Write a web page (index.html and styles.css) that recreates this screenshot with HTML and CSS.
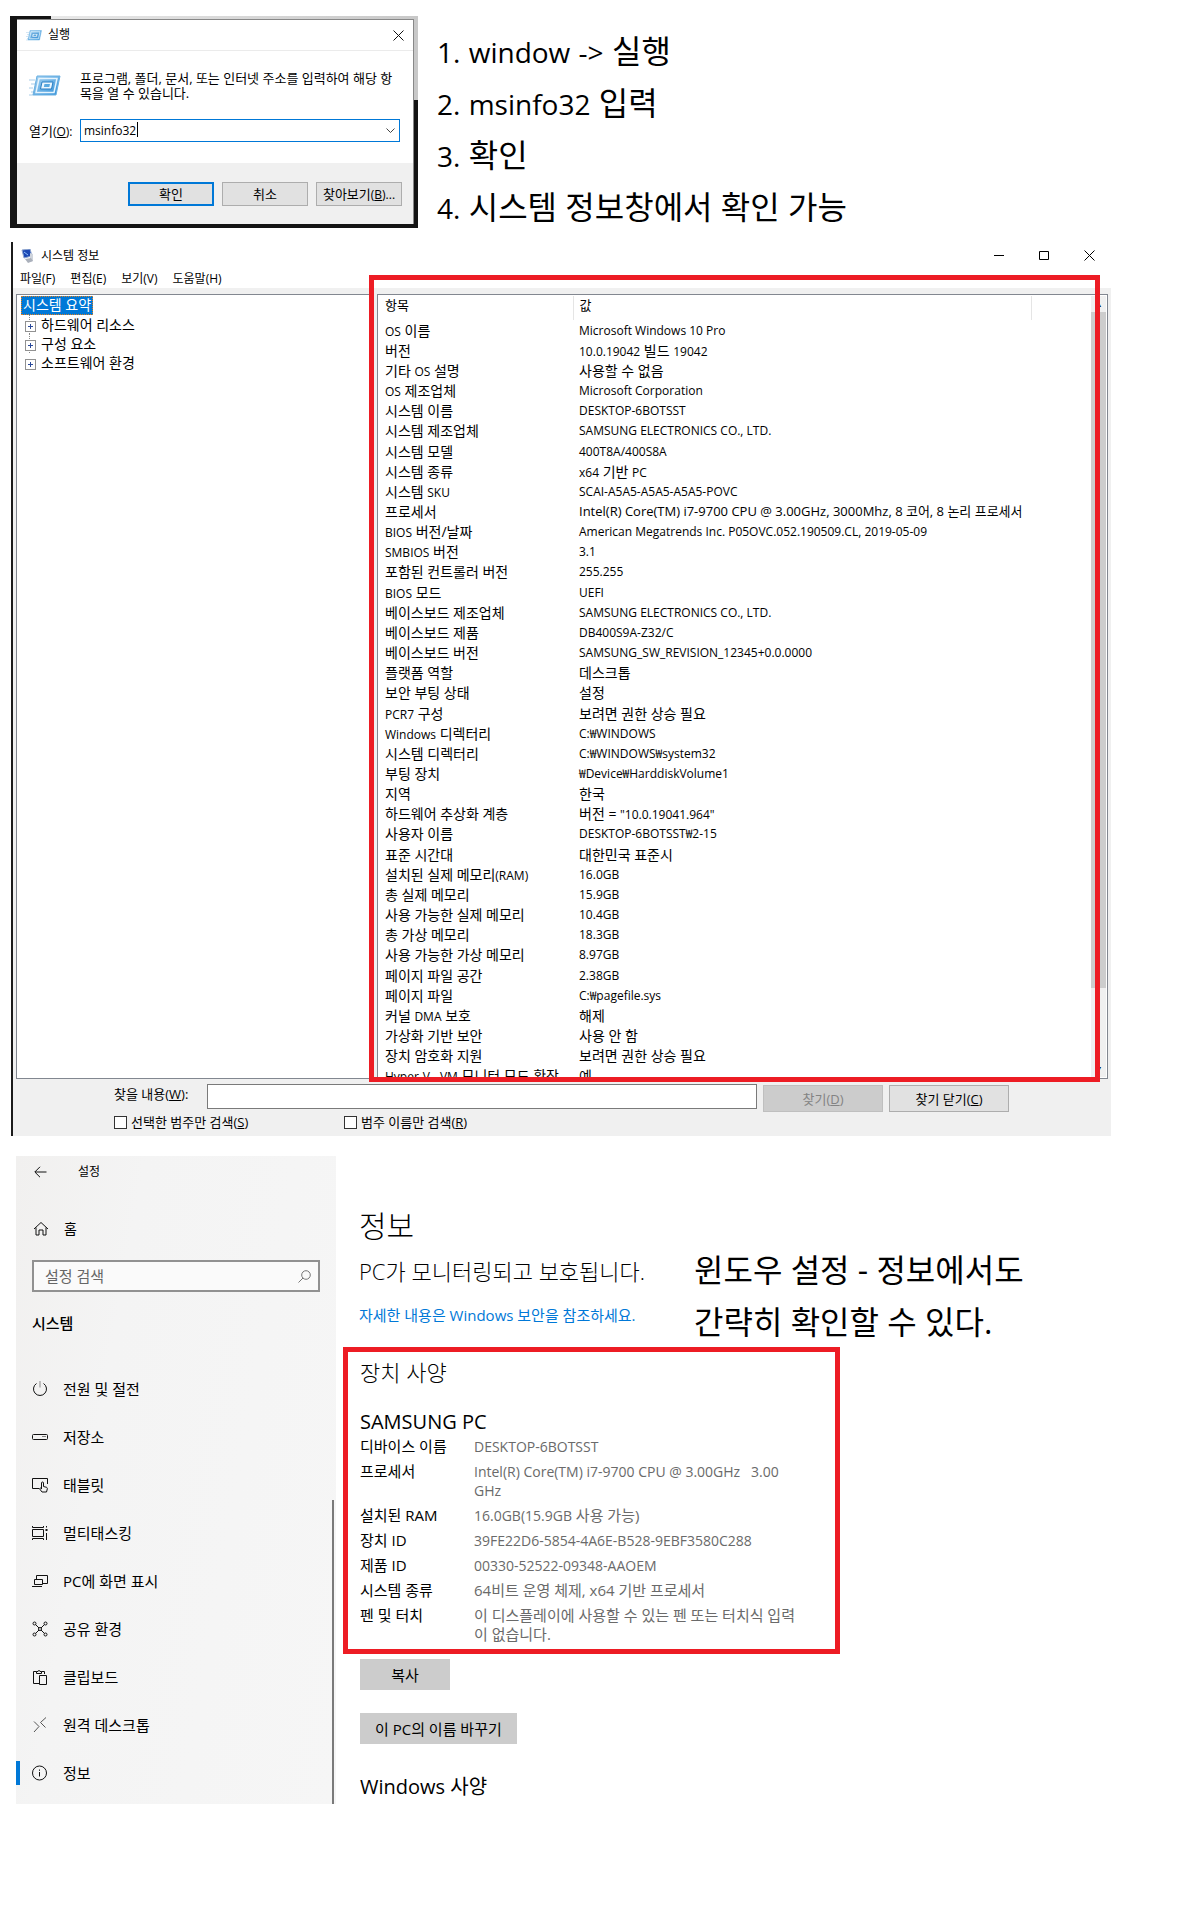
FILE: index.html
```html
<!DOCTYPE html>
<html lang="ko">
<head>
<meta charset="utf-8">
<meta name="viewport" content="width=device-width, initial-scale=1">
<title>컴퓨터 사양 확인 방법</title>
<link rel="stylesheet" href="styles.css">
</head>
<body>
<svg class="defs" width="0" height="0" aria-hidden="true">
  <defs>
    <linearGradient id="run-blue" x1="0" y1="0" x2="1" y2="1">
      <stop offset="0" stop-color="#a8d4f2"/><stop offset="1" stop-color="#2f8fd8"/>
    </linearGradient>
    <symbol id="run-icon" viewBox="0 0 32 22">
      <path d="M0 5h6M2 9h4M0 13h4M2 17h3M0 20h4" stroke="#a9cde8" stroke-width="1"/>
      <path d="M8 1h23l-4 19H4z" fill="url(#run-blue)" stroke="#6bb0e2"/>
      <path d="M10 3.500h18l-3 14H7z" fill="none" stroke="#e6f4fd" stroke-width="1.500"/>
      <path d="M13 7h11l-1.500 7H11.500z" fill="#eaf6fe" stroke="#2a7fc4"/>
      <path d="M15.500 9h5.500l-.7 3h-5.500z" fill="#5aa9e0"/>
    </symbol>
  </defs>
</svg>
<main>
  <section class="intro">
    <div class="run-shot">
      <form class="run">
        <header class="run-title">
          <svg class="run-small" width="16" height="13"><use href="#run-icon"/></svg>
          <span>실행</span>
          <button type="button" class="plain" aria-label="닫기"><svg width="11" height="11" viewBox="0 0 11 11"><path d="M.5.5l10 10M10.500.5l-10 10" stroke="#111" fill="none"/></svg></button>
        </header>
        <div class="run-body">
          <svg class="run-big" width="32" height="22"><use href="#run-icon"/></svg>
          <p>프로그램, 폴더, 문서, 또는 인터넷 주소를 입력하여 해당 항목을 열 수 있습니다.</p>
          <label for="open">열기<span class="en">(<u>O</u>):</span></label>
          <div class="combo">
            <input id="open" type="text" value="msinfo32">
            <span class="caret"></span>
            <svg width="9" height="5" viewBox="0 0 9 5"><path d="M.5.5l4 4 4-4" stroke="#444" fill="none"/></svg>
          </div>
        </div>
        <footer class="run-foot">
          <button type="button" class="btn primary">확인</button>
          <button type="button" class="btn">취소</button>
          <button type="button" class="btn">찾아보기<span class="en">(<u>B</u>)...</span></button>
        </footer>
      </form>
    </div>
    <ol class="note steps">
      <li><span class="en">1.</span> <span class="en">window</span> <span class="en">-&gt;</span> 실행</li>
      <li><span class="en">2.</span> <span class="en">msinfo32</span> 입력</li>
      <li><span class="en">3.</span> 확인</li>
      <li><span class="en">4.</span> 시스템 정보창에서 확인 가능</li>
    </ol>
  </section>

  <section class="sys">
    <header class="sys-title">
      <svg width="13" height="14" viewBox="0 0 13 14"><path d="M1 1l8-1 2 7-8 2z" fill="#1c48b4" stroke="#8fa6cf"/><path d="M3 3l4 3" stroke="#8ec0ff"/><path d="M9 4l3 1v7l-3 1z" fill="#cfd4dc"/><path d="M4 10l6-1 2 3-5 2z" fill="#aab0bb"/></svg>
      <h2>시스템 정보</h2>
      <div class="winctl">
        <button type="button" class="plain" aria-label="최소화"><svg width="11" height="11" viewBox="0 0 11 11"><path d="M0 5.500h10" stroke="#000"/></svg></button>
        <button type="button" class="plain" aria-label="최대화"><svg width="11" height="11" viewBox="0 0 11 11"><path d="M.5 1.500h9v8h-9z" stroke="#000" fill="none"/></svg></button>
        <button type="button" class="plain" aria-label="닫기"><svg width="11" height="11" viewBox="0 0 11 11"><path d="M.5.5l10 10M10.500.5l-10 10" stroke="#000"/></svg></button>
      </div>
    </header>
    <nav class="menu"><a href="#">파일(F)</a><a href="#">편집(E)</a><a href="#">보기(V)</a><a href="#">도움말(H)</a></nav>
    <div class="panes">
      <div class="tree">
        <span class="selected">시스템 요약</span>
        <ul>
          <li>하드웨어 리소스</li>
          <li>구성 요소</li>
          <li>소프트웨어 환경</li>
        </ul>
      </div>
      <div class="details">
        <table>
          <thead><tr><th>항목</th><th>값</th><th></th></tr></thead>
          <tbody>
            <tr><td><span class="en">OS</span> 이름</td><td colspan="2" class="en">Microsoft Windows 10 Pro</td></tr>
            <tr><td>버전</td><td colspan="2"><span class="en">10.0.19042</span> 빌드 <span class="en">19042</span></td></tr>
            <tr><td>기타 <span class="en">OS</span> 설명</td><td colspan="2">사용할 수 없음</td></tr>
            <tr><td><span class="en">OS</span> 제조업체</td><td colspan="2" class="en">Microsoft Corporation</td></tr>
            <tr><td>시스템 이름</td><td colspan="2" class="en">DESKTOP-6BOTSST</td></tr>
            <tr><td>시스템 제조업체</td><td colspan="2" class="en">SAMSUNG ELECTRONICS CO., LTD.</td></tr>
            <tr><td>시스템 모델</td><td colspan="2" class="en">400T8A/400S8A</td></tr>
            <tr><td>시스템 종류</td><td colspan="2"><span class="en">x64</span> 기반 <span class="en">PC</span></td></tr>
            <tr><td>시스템 <span class="en">SKU</span></td><td colspan="2" class="en">SCAI-A5A5-A5A5-A5A5-POVC</td></tr>
            <tr><td>프로세서</td><td colspan="2" class="mixed">Intel(R) Core(TM) i7-9700 CPU @ 3.00GHz, 3000Mhz, 8 코어, 8 논리 프로세서</td></tr>
            <tr><td><span class="en">BIOS</span> 버전/날짜</td><td colspan="2" class="en">American Megatrends Inc. P05OVC.052.190509.CL, 2019-05-09</td></tr>
            <tr><td><span class="en">SMBIOS</span> 버전</td><td colspan="2" class="en">3.1</td></tr>
            <tr><td>포함된 컨트롤러 버전</td><td colspan="2" class="en">255.255</td></tr>
            <tr><td><span class="en">BIOS</span> 모드</td><td colspan="2" class="en">UEFI</td></tr>
            <tr><td>베이스보드 제조업체</td><td colspan="2" class="en">SAMSUNG ELECTRONICS CO., LTD.</td></tr>
            <tr><td>베이스보드 제품</td><td colspan="2" class="en">DB400S9A-Z32/C</td></tr>
            <tr><td>베이스보드 버전</td><td colspan="2" class="en">SAMSUNG_SW_REVISION_12345+0.0.0000</td></tr>
            <tr><td>플랫폼 역할</td><td colspan="2">데스크톱</td></tr>
            <tr><td>보안 부팅 상태</td><td colspan="2">설정</td></tr>
            <tr><td><span class="en">PCR7</span> 구성</td><td colspan="2">보려면 권한 상승 필요</td></tr>
            <tr><td><span class="en">Windows</span> 디렉터리</td><td colspan="2" class="en">C:₩WINDOWS</td></tr>
            <tr><td>시스템 디렉터리</td><td colspan="2" class="en">C:₩WINDOWS₩system32</td></tr>
            <tr><td>부팅 장치</td><td colspan="2" class="en">₩Device₩HarddiskVolume1</td></tr>
            <tr><td>지역</td><td colspan="2">한국</td></tr>
            <tr><td>하드웨어 추상화 계층</td><td colspan="2">버전 = <span class="en">"10.0.19041.964"</span></td></tr>
            <tr><td>사용자 이름</td><td colspan="2" class="en">DESKTOP-6BOTSST₩2-15</td></tr>
            <tr><td>표준 시간대</td><td colspan="2">대한민국 표준시</td></tr>
            <tr><td>설치된 실제 메모리<span class="en">(RAM)</span></td><td colspan="2" class="en">16.0GB</td></tr>
            <tr><td>총 실제 메모리</td><td colspan="2" class="en">15.9GB</td></tr>
            <tr><td>사용 가능한 실제 메모리</td><td colspan="2" class="en">10.4GB</td></tr>
            <tr><td>총 가상 메모리</td><td colspan="2" class="en">18.3GB</td></tr>
            <tr><td>사용 가능한 가상 메모리</td><td colspan="2" class="en">8.97GB</td></tr>
            <tr><td>페이지 파일 공간</td><td colspan="2" class="en">2.38GB</td></tr>
            <tr><td>페이지 파일</td><td colspan="2" class="en">C:₩pagefile.sys</td></tr>
            <tr><td>커널 <span class="en">DMA</span> 보호</td><td colspan="2">해제</td></tr>
            <tr><td>가상화 기반 보안</td><td colspan="2">사용 안 함</td></tr>
            <tr><td>장치 암호화 지원</td><td colspan="2">보려면 권한 상승 필요</td></tr>
            <tr><td><span class="en">Hyper-V - VM</span> 모니터 모드 확장</td><td colspan="2">예</td></tr>
          </tbody>
        </table>
        <div class="scroll"><i>▴</i><div class="thumb"></div><i>▾</i></div>
      </div>
      <div class="mark"></div>
    </div>
    <form class="find">
      <label for="what">찾을 내용(<u>W</u>):</label>
      <input id="what" type="text">
      <button type="button" class="btn" disabled>찾기(<u>D</u>)</button>
      <button type="button" class="btn">찾기 닫기(<u>C</u>)</button>
      <div class="checks">
        <label><input type="checkbox"><span>선택한 범주만 검색(<u>S</u>)</span></label>
        <label><input type="checkbox"><span>범주 이름만 검색(<u>R</u>)</span></label>
      </div>
    </form>
  </section>

  <section class="settings">
    <aside class="side">
      <div class="back">
        <button type="button" class="plain" aria-label="뒤로"><svg width="13" height="12" viewBox="0 0 13 12"><path d="M12.500 6H1M6 .8L.8 6 6 11.200" stroke="#111" fill="none"/></svg></button>
        <span>설정</span>
      </div>
      <a class="home" href="#"><svg width="16" height="16" viewBox="0 0 16 16"><path d="M1 8l7-6.500L15 8M3 6.500v7.500h3V9h4v5h3V6.500" stroke="#111" fill="none"/></svg>홈</a>
      <div class="search">
        <input type="search" placeholder="설정 검색" aria-label="설정 검색">
        <svg width="13" height="13" viewBox="0 0 13 13"><circle cx="8" cy="5" r="4.300" stroke="#777" fill="none"/><path d="M5 8L.5 12.500" stroke="#777"/></svg>
      </div>
      <h3>시스템</h3>
      <ul class="nav">
        <li><a href="#"><svg viewBox="0 0 16 16"><path d="M4.500 2.500a6.500 6.500 0 1 0 7 0" stroke="#111" fill="none"/><path d="M8 0v6.500" stroke="#888"/></svg>전원 및 절전</a></li>
        <li><a href="#"><svg viewBox="0 0 16 16"><rect x=".5" y="5.500" width="15" height="5" rx="1" stroke="#111" fill="none"/><path d="M10.500 7.500h1M12.500 7.500h1" stroke="#111"/></svg>저장소</a></li>
        <li><a href="#"><svg viewBox="0 0 16 16"><path d="M7 11.500H.5v-10h15V7" stroke="#111" fill="none"/><path d="M9.500 12V6a1 1 0 0 1 2 0v3.500l3 .8c.8.3 1 1 .8 1.700l-.8 3H10L7.700 12c-.3-.8.8-1.500 1.800-.3" stroke="#111" fill="none"/></svg>태블릿</a></li>
        <li><a href="#"><svg viewBox="0 0 16 16"><path d="M.5 4.500h11v7H.5zM.5 1v1.500h11V1M.5 15v-1.500h11V15M14.500 1v1.500M14.500 8v7" stroke="#111" fill="none"/><path d="M13.500 4h2v2h-2z" fill="#111"/></svg>멀티태스킹</a></li>
        <li><a href="#"><svg viewBox="0 0 16 16"><path d="M4.500 6V2.500h11v8H11M2.500 6.500h8v5h-8zM0 13.500h10" stroke="#111" fill="none"/></svg>PC에 화면 표시</a></li>
        <li><a href="#"><svg viewBox="0 0 16 16"><g stroke="#111" fill="none"><circle cx="2.500" cy="2.500" r="1.500"/><circle cx="13.500" cy="2.500" r="1.500"/><circle cx="2.500" cy="13.500" r="1.500"/><circle cx="13.500" cy="13.500" r="1.500"/><circle cx="8" cy="8" r="1.500"/><path d="M3.600 3.600L7 7M12.400 3.600L9 7M3.600 12.400L7 9M12.400 12.400L9 9"/></g></svg>공유 환경</a></li>
        <li><a href="#"><svg viewBox="0 0 16 16"><path d="M7 14.500H1.500v-12h3M9.500 2.500h3V5M4.500 4.500v-2h1.500a1 1 0 0 1 2 0h1.500v2zM7.500 6.500h7v9h-7z" stroke="#111" fill="none"/></svg>클립보드</a></li>
        <li><a href="#"><svg viewBox="0 0 16 16"><path d="M2 4.500l5 5-5 5.500M14 .5l-5.500 5 5 5" stroke="#555" fill="none"/></svg>원격 데스크톱</a></li>
        <li class="current"><a href="#"><svg viewBox="0 0 16 16"><circle cx="7.500" cy="8" r="7" stroke="#111" fill="none"/><path d="M7.500 7v4.500M7.500 4.500v1.300" stroke="#111"/></svg>정보</a></li>
      </ul>
      <div class="side-scroll"></div>
    </aside>
    <div class="about">
      <div class="about-top">
        <div class="about-head">
          <h1>정보</h1>
          <p class="status">PC가 모니터링되고 보호됩니다.</p>
          <a class="more" href="#">자세한 내용은 Windows 보안을 참조하세요.</a>
        </div>
        <p class="note">윈도우 설정 - 정보에서도<br>간략히 확인할 수 있다.</p>
      </div>
      <div class="spec">
        <h2 class="light">장치 사양</h2>
        <h3>SAMSUNG PC</h3>
        <dl>
          <dt>디바이스 이름</dt><dd class="en">DESKTOP-6BOTSST</dd>
          <dt>프로세서</dt><dd class="en">Intel(R) Core(TM) i7-9700 CPU @ 3.00GHz &nbsp; 3.00 GHz</dd>
          <dt>설치된 RAM</dt><dd><span class="en">16.0GB(15.9GB</span> 사용 가능)</dd>
          <dt>장치 ID</dt><dd class="en">39FE22D6-5854-4A6E-B528-9EBF3580C288</dd>
          <dt>제품 ID</dt><dd class="en">00330-52522-09348-AAOEM</dd>
          <dt>시스템 종류</dt><dd>64비트 운영 체제, x64 기반 프로세서</dd>
          <dt>펜 및 터치</dt><dd>이 디스플레이에 사용할 수 있는 펜 또는 터치식 입력이 없습니다.</dd>
        </dl>
      </div>
      <div class="actions">
        <button type="button" class="flat">복사</button>
        <button type="button" class="flat">이 PC의 이름 바꾸기</button>
      </div>
      <h2 class="next">Windows 사양</h2>
    </div>
  </section>
</main>
</body>
</html>
```
FILE: styles.css
```css
* { box-sizing: border-box; }
body {
  margin: 0;
  background: #fff;
  color: #000;
  font: 13px/20px "Open Sans", "Noto Sans CJK KR", sans-serif;
}
h1, h2, h3, p, ol, ul, dl, dd { margin: 0; padding: 0; font-weight: 400; }
ol, ul { list-style: none; }
a { color: inherit; text-decoration: none; }
button, input { font: inherit; color: inherit; border-radius: 0; }
svg { display: block; flex: none; }
span.en { line-height: 1; }
.defs { position: absolute; }
.plain { padding: 0; border: 0; background: none; }
main { padding: 16px 0 128px 10px; }
.note { font-size: 32px; line-height: 52px; }
.note .en { font-size: 28px; }
.btn { border: 1px solid #adadad; background: #e1e1e1; padding: 0; }

/* Run dialog */
.intro { display: flex; align-items: flex-start; gap: 19px; margin-bottom: 9px; }
.run-shot {
  flex: none;
  width: 408px;
  padding: 3px 4px 4px 7px;
  background:
    linear-gradient(90deg, #e8e8e8, #c8c8c8) 41px 0 / 367px 3px no-repeat,
    linear-gradient(#c8c8c8, #c8c8c8) 100% 0 / 4px 84px no-repeat,
    #141414;
}
.run { background: #fff; border: 1px solid #888; border-width: 1px 1px 0 0; }
.run-title { display: flex; align-items: center; gap: 6px; height: 31px; padding: 0 9px; border-bottom: 1px solid #ebebeb; font-size: 12px; }
.run-title .plain { margin-left: auto; }
.run-body {
  display: grid;
  grid-template-columns: 51px 1fr;
  row-gap: 18px;
  align-items: center;
  padding: 20px 13px 21px 12px;
}
.run .en { font-size: 12px; }
.run-body p { line-height: 15px; word-break: break-all; }
.combo { position: relative; display: flex; align-items: center; height: 23px; border: 1px solid #0078d7; padding: 0 4px 0 3px; font-size: 12px; }
.combo input { flex: 1; min-width: 0; border: 0; outline: 0; padding: 0; height: 18px; }
.caret { position: absolute; left: 56px; top: 2px; width: 1px; height: 15px; background: #000; }
.run-foot { display: flex; justify-content: flex-end; gap: 8px; padding: 19px 11px 18px; background: #f0f0f0; }
.run-foot .btn { width: 86px; height: 24px; line-height: 18px; }
.run-foot .primary { border: 2px solid #0078d7; line-height: 16px; }
.steps { padding-top: 9px; }

/* System information window */
.sys { margin: 0 89px 20px 1px; border-left: 2px solid #1b1b1b; background: #f0f0f0; }
.sys-title { display: flex; align-items: center; gap: 7px; height: 27px; padding: 0 16px 0 8px; background: #fff; }
.sys-title h2 { font-size: 12px; }
.winctl { display: flex; gap: 34px; margin-left: auto; }
.menu { display: flex; gap: 15px; height: 19px; padding-left: 7px; background: #fff; font-size: 12px; line-height: 20px; }
.panes { position: relative; display: flex; gap: 6px; padding: 6px 3px 0; }
.tree, .details { height: 785px; border: 1px solid #828790; background: #fff; overflow: hidden; }
.tree { flex: 0 0 355px; padding: 1px 4px; font-size: 14px; line-height: 19px; }
.selected { display: block; width: fit-content; height: 19px; padding: 0 1px; border: 1px dotted #e08020; background: #0078d7; color: #fff; line-height: 15px; }
.tree ul { margin-left: 8px; }
.tree li { position: relative; padding-left: 11px; border-left: 1px dotted #888; }
.tree li::before {
  content: "";
  position: absolute;
  left: -5px;
  top: 6px;
  width: 9px;
  height: 9px;
  border: 1px solid #919191;
  background:
    linear-gradient(#2b4a9b, #2b4a9b) center / 5px 1px no-repeat,
    linear-gradient(#2b4a9b, #2b4a9b) center / 1px 5px no-repeat,
    #fff;
}
.tree li:last-child { border-left-color: transparent; }
.details { flex: 1; min-width: 0; display: flex; padding: 1px; }
.details table { flex: 1; height: 790px; border-collapse: collapse; table-layout: fixed; font-size: 14px; }
.details th, .details td { padding: 0 0 0 6px; font-weight: 400; text-align: left; white-space: nowrap; overflow: hidden; line-height: 19px; }
.details th { height: 24px; border-right: 1px solid #e5e5e5; font-size: 13px; vertical-align: top; }
.details th:nth-child(1) { width: 194px; }
.details th:nth-child(3) { width: 60px; border: 0; }
.details .en { font-size: 12px; }
.details .mixed { font-size: 13px; }
.scroll { display: flex; flex-direction: column; flex: none; width: 15px; background: #f0f0f0; }
.scroll i { height: 16px; font: 10px/16px "DejaVu Sans", sans-serif; text-align: center; }
.thumb { height: 676px; margin-bottom: auto; background: #cdcdcd; }
.mark { position: absolute; inset: -13px 11px -3px 356px; border: 5px solid #ed1c24; }
.find {
  display: grid;
  grid-template-columns: 87px 1fr 120px 120px;
  column-gap: 6px;
  align-items: start;
  padding: 5px 102px 4px 101px;
}
.find > label { line-height: 20px; white-space: nowrap; }
.find > input { min-width: 0; width: 100%; height: 25px; border: 1px solid #7a7a7a; background: #fff; }
.find .btn { height: 27px; margin-top: 1px; }
.find .btn:disabled { background: #ccc; border-color: #bfbfbf; color: #838383; }
.checks { grid-column: 1 / -1; display: flex; }
.checks label { flex: 0 0 230px; display: flex; align-items: center; gap: 4px; }
.checks input { appearance: none; width: 13px; height: 13px; margin: 0; border: 1px solid #333; background: #fff; }

/* Settings app */
.settings { display: flex; margin-left: 6px; font-size: 15px; }
.side {
  position: relative;
  flex: 0 0 320px;
  padding-bottom: 7px;
  background: linear-gradient(100deg, #f1f0ef, #f4f4f4 30%, #f6f6f6);
}
.back { display: flex; align-items: center; gap: 31px; height: 32px; padding-left: 18px; font-size: 12px; }
.home { display: flex; align-items: center; gap: 15px; height: 48px; margin-top: 17px; padding-left: 17px; font-size: 14px; }
.search { display: flex; align-items: center; height: 32px; margin: 7px 16px 0; padding: 0 7px 0 11px; border: 2px solid #919191; background: #fafafa; }
.search input { flex: 1; min-width: 0; padding: 0; border: 0; outline: 0; background: none; }
.search input::placeholder { color: #666; opacity: 1; }
.side h3 { margin: 20px 0 31px 16px; font-size: 15px; line-height: 22px; font-weight: 500; }
.nav a { display: flex; align-items: center; gap: 15px; height: 48px; padding-left: 16px; }
.nav svg { width: 16px; height: 16px; }
.nav .current { background: linear-gradient(#0078d7, #0078d7) 0 50% / 4px 24px no-repeat; }
.side-scroll { position: absolute; right: 2px; top: 344px; bottom: 0; width: 2px; background: #7a7a7a; }
.about { flex: 1; min-width: 0; padding: 49px 0 0 7px; }
.about-top { display: flex; gap: 55px; padding-left: 16px; }
.about-head { flex: 0 0 280px; min-width: 0; white-space: nowrap; }
.about h1 { font-size: 30px; line-height: 42px; font-weight: 300; }
.status { margin-top: 9px; font-size: 22px; line-height: 30px; font-weight: 300; }
.more { display: block; margin-top: 19px; line-height: 20px; color: #0078d7; }
.about-top .note { margin-top: 39px; white-space: nowrap; }
.about h2, .spec h3 { font-size: 20px; line-height: 30px; }
.about .light { font-size: 22px; font-weight: 300; }
.spec { width: 497px; margin-top: -1px; padding: 5px 12px; border: 5px solid #ed1c24; }
.spec h3 { margin-top: 20px; }
.spec dl { display: grid; grid-template-columns: 114px 1fr; row-gap: 6px; line-height: 19px; }
.spec dd { color: #6a6a6a; word-break: break-all; padding-right: 22px; }
.spec .en { font-size: 14px; word-break: normal; }
.actions { display: flex; flex-direction: column; align-items: flex-start; gap: 23px; margin: 5px 17px 28px; }
.flat { min-width: 90px; height: 31px; padding: 0 15px; border: 0; background: #ccc; }
.about .next { padding-left: 17px; }
```
